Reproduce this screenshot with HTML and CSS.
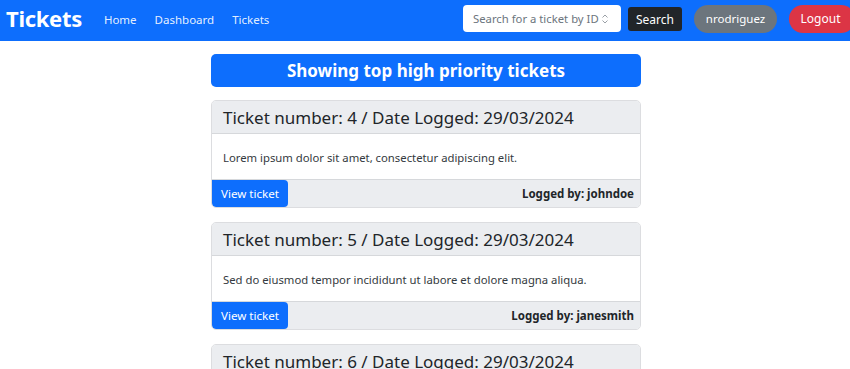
FILE: index.html
```html
<!DOCTYPE html>
<html lang="en">
<head>
<meta charset="utf-8">
<title>Tickets</title>
<link rel="stylesheet" href="styles.css">
</head>
<body>
<nav class="navbar">
  <a class="brand" href="#">Tickets</a>
  <ul class="nav-links">
    <li><a href="#">Home</a></li>
    <li><a href="#">Dashboard</a></li>
    <li><a href="#">Tickets</a></li>
  </ul>
  <form class="search">
    <div class="search-input">
      <span class="placeholder">Search for a ticket by ID</span>
      <svg class="spinner" width="8" height="12" viewBox="0 0 8 12"><path d="M1.5 4.5 L4 2 L6.5 4.5" fill="none" stroke="#9aa0a6" stroke-width="1"/><path d="M1.5 7.5 L4 10 L6.5 7.5" fill="none" stroke="#9aa0a6" stroke-width="1"/></svg>
    </div>
    <button class="btn btn-dark" type="button">Search</button>
  </form>
  <div class="user">
    <button class="btn pill btn-gray" type="button">nrodriguez</button>
    <button class="btn pill btn-red" type="button">Logout</button>
  </div>
</nav>
<main class="container">
  <h2 class="title">Showing top high priority tickets</h2>
  <div class="card">
    <div class="card-header">Ticket number: 4 / Date Logged: 29/03/2024</div>
    <div class="card-body">Lorem ipsum dolor sit amet, consectetur adipiscing elit.</div>
    <div class="card-footer"><a class="view" href="#">View ticket</a><span class="by">Logged by: johndoe</span></div>
  </div>
  <div class="card">
    <div class="card-header">Ticket number: 5 / Date Logged: 29/03/2024</div>
    <div class="card-body">Sed do eiusmod tempor incididunt ut labore et dolore magna aliqua.</div>
    <div class="card-footer"><a class="view" href="#">View ticket</a><span class="by">Logged by: janesmith</span></div>
  </div>
  <div class="card">
    <div class="card-header">Ticket number: 6 / Date Logged: 29/03/2024</div>
    <div class="card-body">Ut enim ad minim veniam, quis nostrud exercitation ullamco.</div>
    <div class="card-footer"><a class="view" href="#">View ticket</a><span class="by">Logged by: nrodriguez</span></div>
  </div>
</main>
</body>
</html>
```
FILE: styles.css
```css
* { box-sizing: border-box; }
html, body { margin: 0; padding: 0; }
body {
  font-family: "Noto Sans", "Open Sans", sans-serif;
  color: #212529;
  background: #fff;
}
.navbar {
  display: flex;
  align-items: center;
  height: 41px;
  background: #0d6efd;
  padding: 0 0 0 6px;
}
.brand {
  color: #fff;
  font-weight: 700;
  font-size: 22px;
  text-decoration: none;
  letter-spacing: -0.3px;
  margin-right: 22px;
  line-height: 1;
  margin-top: -5px;
}
.nav-links {
  display: flex;
  list-style: none;
  margin: 0;
  padding: 0;
  gap: 0;
}
.nav-links a {
  color: rgba(255,255,255,0.9);
  text-decoration: none;
  font-size: 11.5px;
  margin-right: 18px;
  position: relative;
  top: -3px;
}
.search {
  display: flex;
  align-items: center;
  margin-left: auto;
  gap: 7px;
}
.search-input {
  width: 158px;
  height: 27px;
  background: #fff;
  border-radius: 4px;
  display: flex;
  align-items: center;
  justify-content: space-between;
  padding: 0 12px 0 10px;
  margin-top: -4px;
}
.placeholder {
  color: #6c757d;
  font-size: 11.3px;
  white-space: nowrap;
}
.spinner { flex: none; }
.btn {
  border: 0;
  color: #fff;
  font-family: inherit;
  font-size: 12px;
  cursor: pointer;
}
.btn-dark {
  background: #212529;
  height: 24px;
  width: 54px;
  border-radius: 3px;
  padding: 0;
  margin-top: -3px;
}
.user {
  display: flex;
  align-items: center;
  gap: 12px;
  margin-left: 12px;
  margin-top: -4px;
}
.pill {
  height: 28px;
  border-radius: 14px;
  padding: 0;
}
.btn-gray { background: #6c757d; width: 83px; font-size: 11.5px; }
.btn-red { background: #dc3545; width: 66px; margin-right: -5px; padding-right: 3px; }
.container {
  width: 430px;
  margin: 13px 0 0 calc(50% - 214px);
  display: flex;
  flex-direction: column;
  gap: 14px;
}
.title {
  margin: 0 0 -1px;
  background: #0d6efd;
  color: #fff;
  border-radius: 5px;
  height: 33px;
  display: flex;
  align-items: center;
  justify-content: center;
  font-size: 17px;
  font-weight: 700;
}
.card {
  border: 1px solid #dcdde0;
  border-radius: 5px;
  overflow: hidden;
  height: 108px;
  display: flex;
  flex-direction: column;
}
.card-header {
  background: #ebedf0;
  height: 33px;
  border-bottom: 1px solid #d6d8db;
  display: flex;
  align-items: center;
  padding: 0 11px;
  font-size: 17px;
  white-space: nowrap;
}
.card-body {
  height: 45px;
  display: flex;
  align-items: center;
  padding: 0 11px;
  font-size: 11.3px;
  color: #343a40;
  padding-top: 2px;
}
.card-footer {
  flex: 1;
  background: #ebedf0;
  border-top: 1px solid #d6d8db;
  display: flex;
  align-items: stretch;
  justify-content: space-between;
}
.view {
  background: #0d6efd;
  color: #fff;
  text-decoration: none;
  font-size: 11.6px;
  width: 76px;
  display: flex;
  align-items: center;
  justify-content: center;
  border-radius: 0 4px 4px 4px;
}
.by {
  font-weight: 700;
  font-size: 11.5px;
  display: flex;
  align-items: center;
  padding-right: 6px;
}
```
